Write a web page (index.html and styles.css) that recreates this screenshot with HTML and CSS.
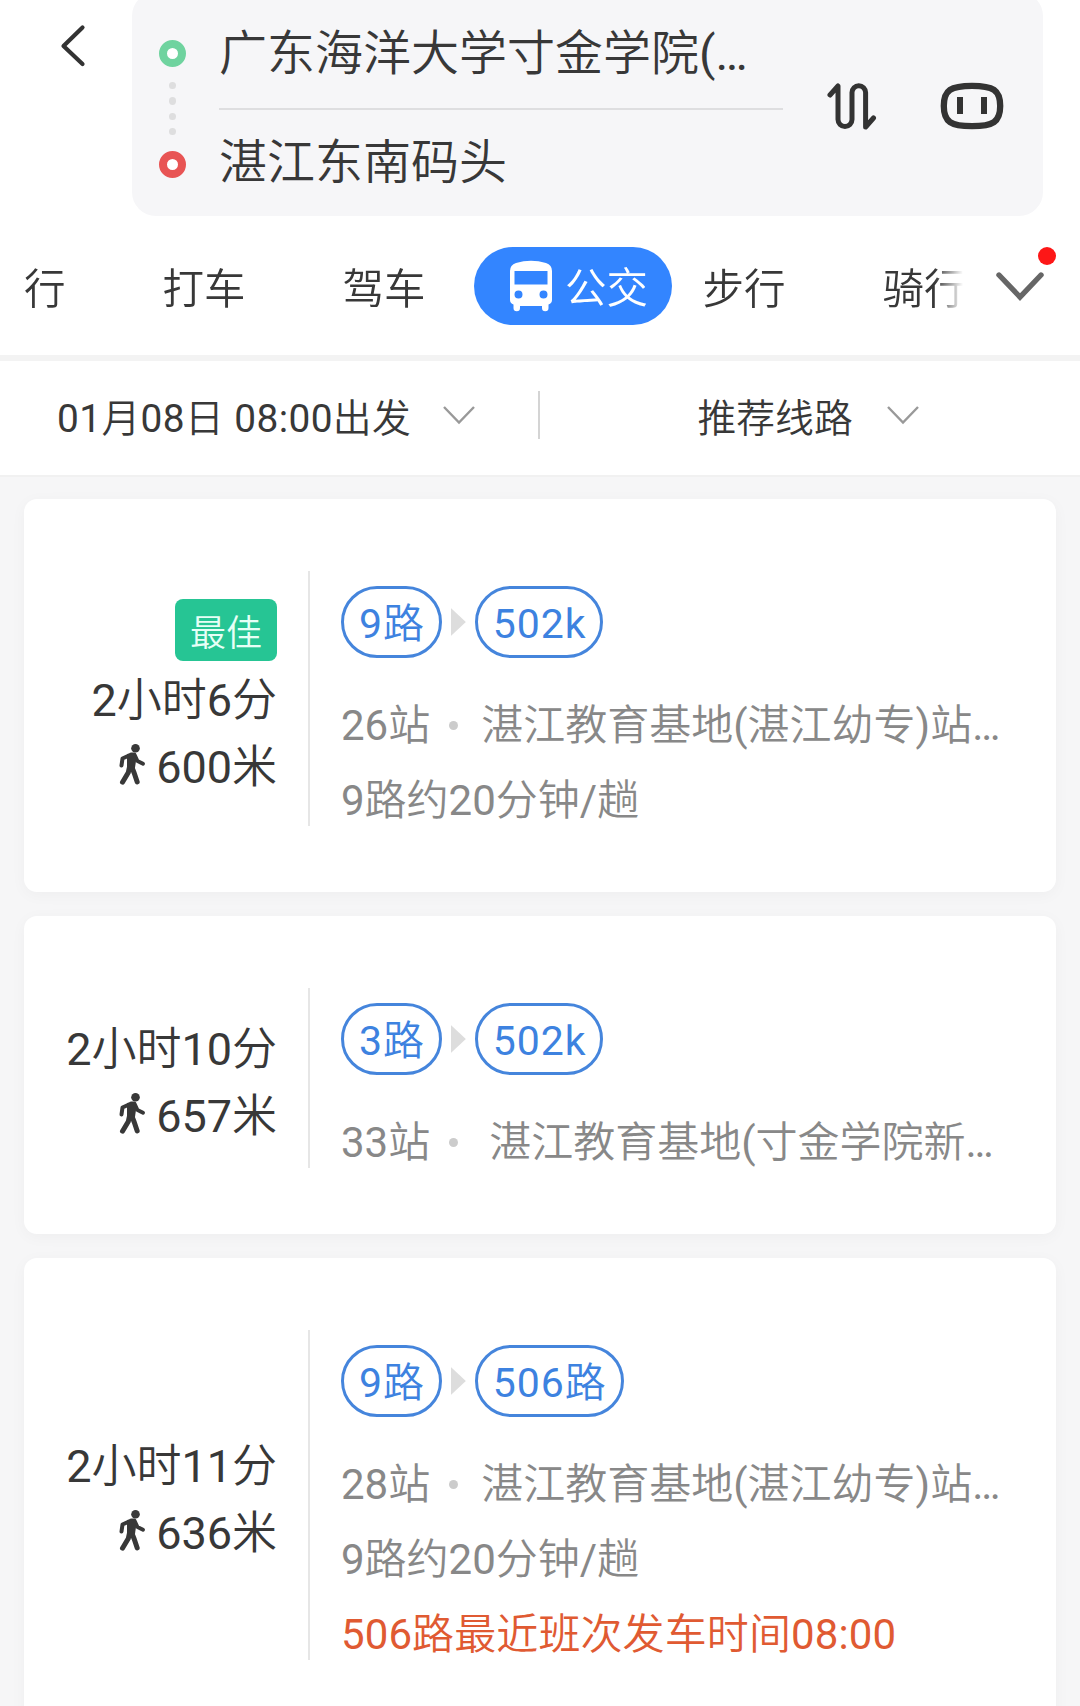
FILE: index.html
```html
<!DOCTYPE html>
<html lang="zh-CN">
<head>
    <meta charset="UTF-8">
    <meta name="viewport" content="width=device-width, initial-scale=1.0">
    <title>公交路线</title>
    <link rel="stylesheet" href="styles.css">
</head>
<body>
    <svg class="sprite" width="0" height="0">
        <symbol id="walk" viewBox="0 0 26 41">
            <circle cx="16.5" cy="4.3" r="4.3"/>
            <path d="M12 10.5 L15.5 10.5 L18.5 17 L24 19.8" fill="none" stroke="currentColor" stroke-width="3.8" stroke-linecap="round" stroke-linejoin="round"/>
            <path d="M10 11.5 L3.5 14.5 L2.5 21.5" fill="none" stroke="currentColor" stroke-width="4" stroke-linecap="round" stroke-linejoin="round"/>
            <path d="M8 10 L16 9 L17 17 L15.5 27 L8 26 Z"/>
            <path d="M10.5 23 L9.3 28.5 L3.5 38.2 M13 23.5 L15.2 29 L18.2 38" fill="none" stroke="currentColor" stroke-width="5" stroke-linecap="round" stroke-linejoin="round"/>
        </symbol>
        <symbol id="down" viewBox="0 0 34 20">
            <path d="M2 2 L17 17.5 L32 2" fill="none" stroke="#999" stroke-width="2.4"/>
        </symbol>
    </svg>

    <div class="header">
        <div class="back">
            <svg width="26" height="44" viewBox="0 0 26 44">
                <path d="M22.5 4.5 L3.5 23 L22.5 41" fill="none" stroke="#333" stroke-width="4.2" stroke-linecap="round" stroke-linejoin="round"/>
            </svg>
        </div>
        <div class="search">
            <div class="points">
                <span class="ring start"></span>
                <span class="dot"></span>
                <span class="dot"></span>
                <span class="dot"></span>
                <span class="dot"></span>
                <span class="ring end"></span>
            </div>
            <div class="places">
                <div class="place">广东海洋大学寸金学院(…</div>
                <div class="place">湛江东南码头</div>
            </div>
            <svg class="swap" width="50" height="50" viewBox="0 0 50 50">
                <path d="M3 14 L11 5 V38.5 A7 7 0 0 0 25 38.5 V11.5 A6.8 6.8 0 0 1 38.6 11.5 V46 L46.5 37" fill="none" stroke="#333" stroke-width="5" stroke-linecap="round" stroke-linejoin="round"/>
            </svg>
            <svg class="robot" width="64" height="48" viewBox="0 0 64 48">
                <path d="M32 3.8 C53 3.8 60.2 8 60.2 24 C60.2 40 53 44.2 32 44.2 C11 44.2 3.8 40 3.8 24 C3.8 8 11 3.8 32 3.8 Z" fill="none" stroke="#333" stroke-width="6.3"/>
                <path d="M20 15 V32 M44 15 V32" stroke="#333" stroke-width="6"/>
            </svg>
        </div>
    </div>

    <div class="nav">
        <div class="tabs">
            <div class="tab first">行</div>
            <div class="tab">打车</div>
            <div class="tab">驾车</div>
            <div class="tab active">
                <svg width="44" height="52" viewBox="0 0 44 52">
                    <path fill="#fff" fill-rule="evenodd" d="M1 11 Q1 5 7 3 Q22 -1.5 37 3 Q43 5 43 11 V40 Q43 43 39.5 44.5 V48 A3 3 0 0 1 33 48 V46 H11 V48 A3 3 0 0 1 4.5 48 V44.5 Q1 43 1 40 Z M5.5 11 V24.5 H38.5 V11 Z M9.5 30.5 A4 4 0 1 0 9.5 38.5 A4 4 0 1 0 9.5 30.5 Z M34.5 30.5 A4 4 0 1 0 34.5 38.5 A4 4 0 1 0 34.5 30.5 Z"/>
                </svg>
                <span>公交</span>
            </div>
            <div class="tab">步行</div>
            <div class="tab">骑行</div>
        </div>
        <div class="more">
            <svg width="50" height="32" viewBox="0 0 50 32">
                <path d="M4 4 L25 26 L46 4" fill="none" stroke="#666" stroke-width="5.4" stroke-linecap="round"/>
            </svg>
            <span class="badge"></span>
        </div>
    </div>

    <div class="filter">
        <div class="choice time">
            <span>01月08日 08:00出发</span>
            <svg width="34" height="20"><use href="#down"/></svg>
        </div>
        <div class="choice sort">
            <span>推荐线路</span>
            <svg width="34" height="20"><use href="#down"/></svg>
        </div>
    </div>

    <div class="list">
        <div class="card">
            <div class="summary best">
                <span class="tag">最佳</span>
                <div class="line">2小时6分</div>
                <div class="line"><svg class="walk" width="26" height="41"><use href="#walk"/></svg>600米</div>
            </div>
            <div class="detail">
                <div class="buses"><span class="bus">9路</span><i class="arrow"></i><span class="bus">502k</span></div>
                <div class="info">26站<i class="sep"></i>湛江教育基地(湛江幼专)站…</div>
                <div class="info">9路约20分钟/趟</div>
            </div>
        </div>

        <div class="card">
            <div class="summary">
                <div class="line">2小时10分</div>
                <div class="line"><svg class="walk" width="26" height="41"><use href="#walk"/></svg>657米</div>
            </div>
            <div class="detail">
                <div class="buses"><span class="bus">3路</span><i class="arrow"></i><span class="bus">502k</span></div>
                <div class="info">33站<i class="sep wide"></i>湛江教育基地(寸金学院新…</div>
            </div>
        </div>

        <div class="card">
            <div class="summary">
                <div class="line">2小时11分</div>
                <div class="line"><svg class="walk" width="26" height="41"><use href="#walk"/></svg>636米</div>
            </div>
            <div class="detail">
                <div class="buses"><span class="bus">9路</span><i class="arrow"></i><span class="bus">506路</span></div>
                <div class="info">28站<i class="sep"></i>湛江教育基地(湛江幼专)站…</div>
                <div class="info">9路约20分钟/趟</div>
                <div class="info warn">506路最近班次发车时间08:00</div>
            </div>
        </div>
    </div>
</body>
</html>
```
FILE: styles.css
```css
* {
    box-sizing: border-box;
}
body {
    margin: 0;
    height: 1706px;
    overflow: hidden;
    background-color: #f6f6f7;
    color: #383838;
    font-family: Roboto, "Noto Sans CJK SC DemiLight", "Noto Sans CJK SC Light", "Noto Sans CJK SC", sans-serif;
    font-weight: 400;
    white-space: nowrap;
}
svg {
    display: block;
    flex: none;
}
.sprite {
    position: absolute;
}

/* header */
.header {
    display: flex;
    height: 216px;
    background-color: #fff;
}
.back {
    width: 132px;
    padding: 23px 0 0 60px;
}
.search {
    display: flex;
    width: 911px;
    height: 224px;
    margin-top: -8px;
    padding-top: 8px;
    background-color: #f6f6f8;
    border-radius: 24px;
}
.points {
    display: flex;
    flex-direction: column;
    align-items: center;
    gap: 8px;
    width: 81px;
    padding-top: 40px;
}
.ring {
    width: 27px;
    height: 27px;
    border: 8px solid #6fd39f;
    border-radius: 50%;
    background-color: #fff;
}
.ring.start {
    margin-bottom: 7px;
}
.ring.end {
    border-color: #e85454;
    margin-top: 8px;
}
.dot {
    width: 7px;
    height: 7.3px;
    border-radius: 50%;
    background-color: #dededf;
}
.places {
    width: 570px;
    padding-left: 6px;
}
.place {
    height: 109px;
    line-height: 106px;
    font-size: 48px;
}
.place:first-child {
    width: 564px;
    height: 110px;
    line-height: 108px;
    border-bottom: 2px solid #dedee0;
}
.swap {
    margin: 81px 0 0 44px;
}
.robot {
    margin: 82px 0 0 63px;
}

/* tabs */
.nav {
    display: flex;
    height: 145px;
    padding-top: 31px;
    background-color: #fff;
    border-bottom: 6px solid #f3f3f3;
}
.tabs {
    display: flex;
    width: 966px;
    overflow: hidden;
    -webkit-mask-image: linear-gradient(to right, #000 935px, transparent 963px);
    mask-image: linear-gradient(to right, #000 935px, transparent 963px);
}
.tab {
    flex: none;
    width: 180px;
    height: 78px;
    line-height: 85px;
    text-align: center;
    font-size: 41.5px;
}
.tab.first {
    width: 114px;
    padding-left: 24px;
    text-align: left;
}
.tab.active {
    display: flex;
    align-items: center;
    gap: 12px;
    width: 198px;
    margin-right: -18px;
    padding-left: 35px;
    border-radius: 39px;
    background-color: #3385ff;
    color: #fff;
}
.tab.active span {
    padding-top: 5px;
}
.more {
    position: relative;
    padding: 24px 0 0 29px;
}
.badge {
    position: absolute;
    top: 0;
    left: 72px;
    width: 18px;
    height: 18px;
    border-radius: 50%;
    background-color: #fd1717;
}

/* filter */
.filter {
    display: flex;
    height: 116px;
    background-color: #fff;
    border-bottom: 2px solid #f1f1f1;
}
.choice {
    display: flex;
    align-items: center;
    width: 540px;
    height: 108px;
    font-size: 38.8px;
}
.time {
    justify-content: space-between;
    width: 541px;
    padding: 0 64px 0 57px;
    background: linear-gradient(#d4d4d4, #d4d4d4) no-repeat right 30px / 2px 48px;
    letter-spacing: 0.4px;
}
.sort {
    padding-left: 157px;
    gap: 33px;
}

/* routes */
.list {
    display: flex;
    flex-direction: column;
    gap: 24px;
    padding: 22px 24px 0;
}
.card {
    display: flex;
    padding: 72px 0 66px;
    border-radius: 13px;
    background-color: #fff;
    box-shadow: 0 3px 16px rgba(0, 0, 0, 0.035);
}
.summary {
    display: flex;
    flex-direction: column;
    align-items: flex-end;
    justify-content: center;
    width: 286px;
    padding: 8px 31px 0 0;
    border-right: 2px solid #e6e6e6;
}
.summary.best {
    padding-top: 2px;
}
.tag {
    width: 102px;
    height: 62px;
    margin: 0 0 5px 0;
    line-height: 70px;
    text-align: center;
    font-size: 36px;
    color: #e6fff6;
    border-radius: 8px;
    background-color: #26c594;
}
.line {
    display: flex;
    height: 67px;
    line-height: 70px;
    font-size: 45px;
}
.walk {
    margin: 11px 11px 0 0;
    fill: currentColor;
}
.detail {
    padding: 15px 0 0 31px;
    font-size: 42px;
    color: #888;
}
.buses {
    display: flex;
    align-items: center;
    height: 72px;
    margin-bottom: 28px;
}
.bus {
    height: 72px;
    padding: 0 14px 0 15px;
    line-height: 71px;
    font-size: 41px;
    letter-spacing: 0.9px;
    color: #3d82e0;
    border: 3px solid #4585dc;
    border-radius: 36px;
}
.arrow {
    width: 15px;
    height: 28px;
    margin: 0 9px;
    background-color: #ddd;
    clip-path: polygon(0 0, 100% 50%, 0 100%);
}
.info {
    height: 75px;
    line-height: 79px;
}
.info:last-child {
    height: 65px;
}
.sep {
    display: inline-block;
    width: 9px;
    height: 9px;
    margin: 0 23px 10px 19px;
    border-radius: 50%;
    background-color: #ccc;
}
.sep.wide {
    margin-right: 31px;
}
.warn {
    letter-spacing: 0.1px;
    color: #e05a32;
}
```
